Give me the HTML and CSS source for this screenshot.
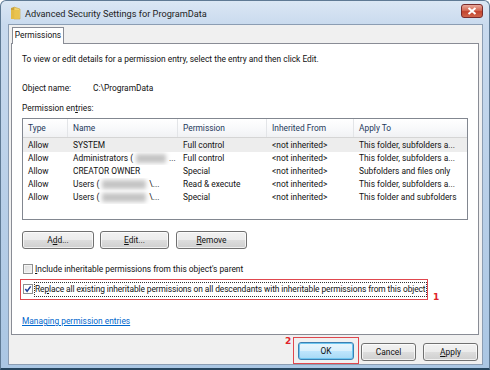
FILE: index.html
```html
<!DOCTYPE html>
<html>
<head>
<meta charset="utf-8">
<link rel="stylesheet" href="styles.css">
</head>
<body>
<div class="window">
  <div class="titlebar">
    <svg class="ticon" width="12" height="14" viewBox="0 0 12 14">
      <path d="M1 2 L4 1 L4 13 L1 13 Z" fill="#c9a23a"/>
      <path d="M4 1 L10 3 L10 13 L4 13 Z" fill="#f2d36b" stroke="#c9a23a" stroke-width="0.6"/>
      <path d="M1 4 L9 4 L9 13 L1 13 Z" fill="#e8bf4a" opacity="0.85"/>
    </svg>
    <span class="title">Advanced Security Settings for ProgramData</span>
    <div class="close"><svg width="10" height="8" viewBox="0 0 10 8"><path d="M1.5 1 L8.5 7 M8.5 1 L1.5 7" stroke="#fff" stroke-width="2"/></svg></div>
  </div>
  <div class="client">
    <div class="tabs"><div class="tab">Permissions</div></div>
    <div class="panel">
      <p class="intro">To view or edit details for a permission entry, select the entry and then click Edit.</p>
      <div class="objrow"><span class="lbl">Object name:</span><span>C:\ProgramData</span></div>
      <div class="entries">Permission en<u>t</u>ries:</div>
      <div class="list">
        <div class="row head">
          <div class="c c1">Type</div><div class="c c2">Name</div><div class="c c3">Permission</div><div class="c c4">Inherited From</div><div class="c c5">Apply To</div>
        </div>
        <div class="row sel">
          <div class="c c1">Allow</div><div class="c c2">SYSTEM</div><div class="c c3">Full control</div><div class="c c4">&lt;not inherited&gt;</div><div class="c c5">This folder, subfolders a...</div>
        </div>
        <div class="row">
          <div class="c c1">Allow</div><div class="c c2">Administrators (<span class="blur b1"></span>...</div><div class="c c3">Full control</div><div class="c c4">&lt;not inherited&gt;</div><div class="c c5">This folder, subfolders a...</div>
        </div>
        <div class="row">
          <div class="c c1">Allow</div><div class="c c2">CREATOR OWNER</div><div class="c c3">Special</div><div class="c c4">&lt;not inherited&gt;</div><div class="c c5">Subfolders and files only</div>
        </div>
        <div class="row">
          <div class="c c1">Allow</div><div class="c c2">Users (<span class="blur b2"></span>\...</div><div class="c c3">Read &amp; execute</div><div class="c c4">&lt;not inherited&gt;</div><div class="c c5">This folder, subfolders a...</div>
        </div>
        <div class="row">
          <div class="c c1">Allow</div><div class="c c2">Users (<span class="blur b2"></span>\...</div><div class="c c3">Special</div><div class="c c4">&lt;not inherited&gt;</div><div class="c c5">This folder and subfolders</div>
        </div>
      </div>
      <div class="btnrow">
        <div class="btn w71">A<u>d</u>d...</div>
        <div class="btn w69"><u>E</u>dit...</div>
        <div class="btn w70"><u>R</u>emove</div>
      </div>
      <div class="chkrow c1row"><span class="chk"></span><span><u>I</u>nclude inheritable permissions from this object's parent</span></div>
      <div class="redbox">
        <div class="chkrow"><span class="chk on"><svg width="8" height="8" viewBox="0 0 9 9"><path d="M1.5 4.5 L3.5 7 L7.5 1.5" fill="none" stroke="#21409a" stroke-width="1.7"/></svg></span><span class="focus">Re<u>p</u>lace all existing inheritable permissions on all descendants with inheritable permissions from this object</span></div>
        <span class="num n1">1</span>
      </div>
      <a class="link">Managing permission entries</a>
    </div>
    <div class="footer">
      <div class="okwrap">
        <span class="num n2">2</span>
        <div class="btn ok">OK</div>
      </div>
      <div class="btn w55">Cancel</div>
      <div class="btn w55"><u>A</u>pply</div>
    </div>
  </div>
</div>
</body>
</html>
```

FILE: styles.css
```css
* { box-sizing: border-box; }
html, body { margin: 0; padding: 0; }
body {
  font-family: Roboto, "Noto Sans", sans-serif;
  font-size: 8.4px;
  color: #111;
  background: #fff;
}
.window {
  width: 490px;
  height: 370px;
  background: linear-gradient(to bottom, #dbe7f4 0px, #c9daee 24px, #b8cfe8 200px, #aac6e3 370px);
  border: 1px solid #5f7a94;
  border-bottom: 2px solid #27465f;
  border-radius: 6px 6px 0 0;
  display: flex;
  flex-direction: column;
  overflow: hidden;
}
.titlebar {
  height: 23px;
  display: flex;
  align-items: center;
  padding: 0 6px 0 9px;
  flex: none;
}
.ticon { margin-right: 3px; margin-top: 1px; }
.title {
  font-size: 9.2px;
  color: #1e1e1e;
  flex: 1;
  margin-top: 1px;
}
.close {
  width: 22px;
  height: 14px;
  border-radius: 3px;
  border: 1px solid #7a2b2b;
  background: linear-gradient(to bottom, #e9a99b 0%, #d46a55 45%, #c2432e 55%, #d0654b 100%);
  display: flex;
  align-items: center;
  justify-content: center;
  margin-top: -3px;
}
.client {
  flex: none;
  height: 341px;
  margin: 0 6px 0 7px;
  background: #f0f0f0;
  border: 1px solid #8b9db3;
  padding: 2px 3px 0 2px;
  display: flex;
  flex-direction: column;
}
.tabs { display: flex; height: 16px; position: relative; z-index: 1; flex: none; }
.tab {
  height: 17px;
  width: 52px;
  text-align: center;
  border: 1px solid #898c95;
  border-bottom: none;
  background: #fff;
  line-height: 15px;
  margin-left: 1px;
}
.panel {
  height: 292px;
  flex: none;
  background: #fff;
  border: 1px solid #898c95;
  padding: 0 9px 0 10px;
  display: flex;
  flex-direction: column;
}
.intro { margin: 8px 0 0 0; line-height: 14px; }
.objrow { margin-top: 15px; line-height: 14px; display: flex; }
.objrow .lbl { width: 71px; }
.entries { margin-top: 6px; line-height: 14px; }
u { text-decoration: underline; }
.list {
  margin-top: 3px;
  width: 446px;
  height: 102px;
  border: 1px solid #828790;
  flex: none;
}
.row { display: flex; height: 13px; line-height: 13px; }
.row.head {
  height: 19px;
  line-height: 19px;
  background: linear-gradient(to bottom, #fff 0%, #f7f8fa 60%, #f1f2f4 100%);
  border-bottom: 1px solid #d5d5d5;
  color: #1e395b;
}
.row.head .c { border-right: 1px solid #e3e5e8; }
.row.sel { background: #ededed; height: 14px; line-height: 14px; }
.c { white-space: nowrap; overflow: hidden; padding-left: 5px; flex: none; }
.c1 { width: 45px; }
.c2 { width: 110px; }
.c3 { width: 89px; }
.c4 { width: 87px; }
.c5 { width: 113px; }
.row.head .c5 { border-right: none; }
.blur {
  display: inline-block;
  height: 9px;
  background: #c4c4c4;
  filter: blur(2px);
  vertical-align: middle;
  margin: 0 3px;
}
.b1 { width: 30px; }
.b2 { width: 44px; }
.btnrow { margin-top: 11px; display: flex; gap: 6px; flex: none; }
.btn {
  height: 18px;
  border: 1px solid #707070;
  border-radius: 3px;
  background: linear-gradient(to bottom, #f2f2f2 0%, #ebebeb 50%, #dddddd 51%, #cfcfcf 100%);
  box-shadow: inset 0 0 0 1px rgba(255,255,255,0.7);
  text-align: center;
  line-height: 16px;
  flex: none;
}
.w71 { width: 72px; }
.w69 { width: 69px; }
.w70 { width: 71px; margin-left: 1px; }
.w55 { width: 55px; }
.chkrow { display: flex; align-items: center; height: 14px; }
.c1row { margin-top: 13px; margin-left: 1px; }
.chk {
  width: 10px;
  height: 10px;
  border: 1px solid #8e8f8f;
  background: linear-gradient(135deg, #dcdcdc 0%, #f4f4f4 100%);
  box-shadow: inset 0 0 0 1px #f4f4f4;
  margin: 0 2px 0 0;
  display: flex;
  align-items: center;
  justify-content: center;
  flex: none;
}
.chk.on { background: #fff; box-shadow: none; }
.redbox {
  margin-top: 3px;
  margin-left: -2px;
  width: 408px;
  height: 21px;
  border: 1px solid #e0474e;
  padding: 2px 0 0 2px;
  position: relative;
  flex: none;
}
.focus {
  outline: 1px dotted #333;
  outline-offset: 0;
  line-height: 13px;
  padding-right: 1px;
  white-space: nowrap;
  letter-spacing: -0.09px;
}
.num {
  position: absolute;
  color: #e0232a;
  font-size: 9px;
  font-weight: bold;
  font-family: "DejaVu Sans", sans-serif;
}
.n1 { left: 412px; top: 12px; }
.link {
  margin-top: 14px;
  color: #0066cc;
  text-decoration: underline;
  line-height: 14px;
  width: max-content;
}
.footer {
  display: flex;
  justify-content: flex-end;
  align-items: flex-start;
  gap: 7px;
  margin-top: 8px;
  padding-right: 1px;
}
.okwrap {
  position: relative;
  width: 66px;
  height: 27px;
  border: 1px solid #e0474e;
  margin-top: -6px;
  margin-right: -5px;
  padding: 4px 0 0 4px;
  flex: none;
}
.btn.ok {
  width: 56px;
  border-color: #3c7fb1;
  background: linear-gradient(to bottom, #eaf6fd 0%, #d9f0fc 50%, #bee6fd 51%, #a7d9f5 100%);
  box-shadow: inset 0 0 0 1px #6ec6f0;
}
.n2 { left: -9px; top: -2px; }
```
